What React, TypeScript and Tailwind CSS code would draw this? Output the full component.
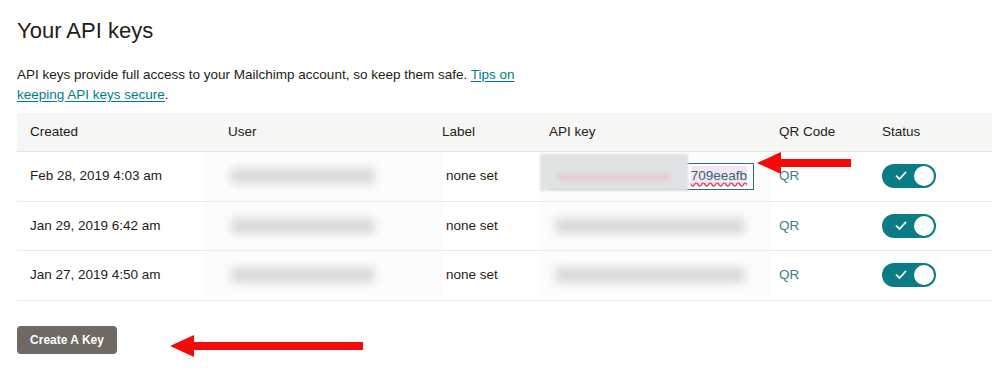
import React from 'react';

const rows = [
  { created: 'Feb 28, 2019 4:03 am', active: true },
  { created: 'Jan 29, 2019 6:42 am', active: false },
  { created: 'Jan 27, 2019 4:50 am', active: false },
];

const cols = 'grid grid-cols-[198px_214px_107px_230px_103px_1fr]';

function Toggle() {
  return (
    <div className="flex h-[24px] w-[54px] items-center justify-between rounded-full bg-[#0b7c86] pl-[13px] pr-[2px]">
      <svg width="12" height="10" viewBox="0 0 12 10" fill="none">
        <path d="M1.5 5.2 L4.5 8 L10.5 1.5" stroke="white" strokeWidth="1.8" strokeLinecap="round" />
      </svg>
      <div className="h-[20px] w-[20px] rounded-full bg-white" />
    </div>
  );
}

function LeftArrow({ width }: { width: number }) {
  return (
    <svg width={width} height="24" viewBox={`0 0 ${width} 24`}>
      <polygon points={`0,12 24,1 24,8 ${width},8 ${width},16 24,16 24,23`} fill="#f50a0a" />
    </svg>
  );
}

function BlurBar({ w }: { w: string }) {
  return <div className={`${w} h-[16px] rounded-sm bg-[#dadada] blur-[4px]`} />;
}

export default function App() {
  return (
    <div className="relative h-[380px] w-[1000px] bg-white px-[17px] pt-[17px] text-[#241c15] font-['Liberation_Sans',sans-serif]">
      <h1 className="text-[22px] leading-[28px] font-normal">Your API keys</h1>
      <p className="mt-[20px] w-[510px] text-[13.5px] leading-[20px]">
        API keys provide full access to your Mailchimp account, so keep them safe.{' '}
        <a className="text-[#007c89] underline underline-offset-2">Tips on keeping API keys secure</a>.
      </p>

      <div className="mt-[8px] w-[975px] text-[13.5px]">
        <div className={`${cols} h-[39px] items-center border-b border-[#e4e4e2] bg-[#f6f6f4] pl-[13px] font-medium`}>
          <div>Created</div>
          <div>User</div>
          <div>Label</div>
          <div>API key</div>
          <div>QR Code</div>
          <div>Status</div>
        </div>
        {rows.map((r, i) => (
          <div key={i} className={`${cols} h-[49.5px] items-center border-b border-[#ebebea] pl-[13px]`}>
            <div>{r.created}</div>
            <div className="-ml-[23px] flex h-full items-center bg-[#fcfcfc] pl-[26px] pr-[20px]">
              <BlurBar w="w-[144px]" />
            </div>
            <div className="pl-[4px]">none set</div>
            <div className="relative -ml-[9px] flex h-full w-[230px] items-center bg-[#fcfcfc] pl-[9px]">
              {r.active ? (
                <div className="relative flex h-[27px] w-[205px] items-center justify-end border border-[#2b6f73] pr-[6px]">
                  <div className="absolute -left-[10px] -top-[10px] h-[37px] w-[148px] bg-[#dfe3e4] blur-[1px]">
                    <div className="mx-[18px] mt-[20px] h-[6px] bg-[#e8c8d0] blur-[2px]" />
                  </div>
                  <span className="bg-[#f7e4f4] text-[#2a6d72] underline decoration-wavy decoration-[#d04040] underline-offset-2">709eeafb</span>
                </div>
              ) : (
                <div className="pl-[6px]">
                  <BlurBar w="w-[190px]" />
                </div>
              )}
            </div>
            <div className="text-[#3b7f85]">QR</div>
            <div>
              <Toggle />
            </div>
          </div>
        ))}
      </div>

      <div className="mt-[21px] flex items-center">
        <button className="h-[28px] w-[100px] rounded-sm bg-[#6e6964] text-[12px] font-bold text-white">
          Create A Key
        </button>
        <div className="ml-[53px] mt-[12px]">
          <LeftArrow width={193} />
        </div>
      </div>

      <div className="absolute left-[757px] top-[151px]">
        <LeftArrow width={94} />
      </div>
    </div>
  );
}
